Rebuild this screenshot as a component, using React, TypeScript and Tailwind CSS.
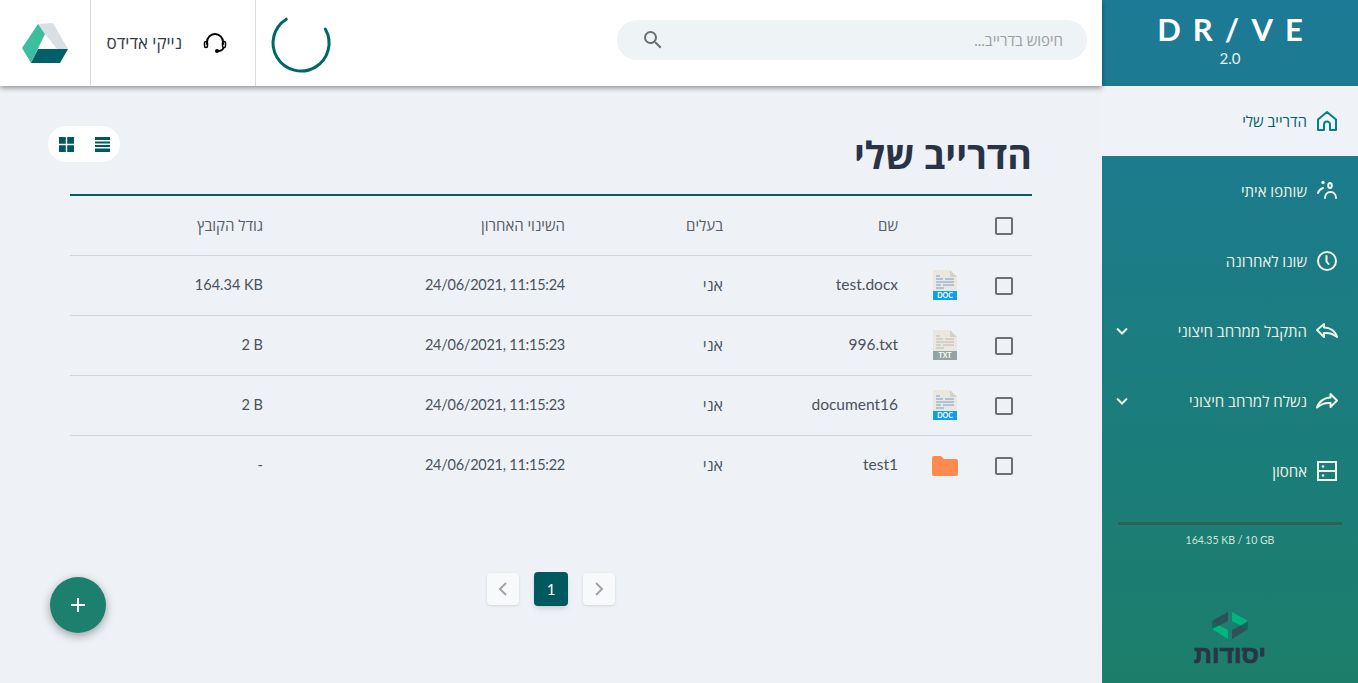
const files = [
  { name: "test.docx", type: "doc", modified: "24/06/2021, 11:15:24", size: "164.34 KB" },
  { name: "996.txt", type: "txt", modified: "24/06/2021, 11:15:23", size: "2 B" },
  { name: "document16", type: "doc", modified: "24/06/2021, 11:15:23", size: "2 B" },
  { name: "test1", type: "folder", modified: "24/06/2021, 11:15:22", size: "-" },
];

const gridCols = "grid grid-cols-[56px_62px_175px_158px_302px_1fr] items-center";

function HomeIcon() {
  return (
    <svg width="22" height="22" viewBox="0 0 22 22" fill="none" stroke="currentColor" strokeWidth="2">
      <path d="M2 9.500 11 2l9 7.500V20H14v-5.500a3 3 0 0 0-6 0V20H2z" strokeLinejoin="round" />
    </svg>
  );
}

function PeopleIcon() {
  return (
    <svg width="22" height="22" viewBox="0 0 22 22" fill="none" stroke="currentColor" strokeWidth="2" strokeLinecap="round">
      <ellipse cx="14" cy="5.500" rx="1.800" ry="2.500" />
      <circle cx="7" cy="2.500" r="1.700" fill="currentColor" stroke="none" />
      <path d="M2 13c.6-2 2.400-4 5-5M9 18c0-3 2-6 5.500-6s5.500 3 5.500 6" />
    </svg>
  );
}

function ClockIcon() {
  return (
    <svg width="22" height="22" viewBox="0 0 22 22" fill="none" stroke="currentColor" strokeWidth="2" strokeLinecap="round">
      <circle cx="11" cy="11" r="9" />
      <path d="M10.500 6v5.500l2 2.500" />
    </svg>
  );
}

function ReplyIcon() {
  return (
    <svg width="22" height="16" viewBox="0 0 22 16" fill="none" stroke="currentColor" strokeWidth="2" strokeLinejoin="round">
      <path d="M8 1 1 7l7 7v-4c5-.500 9 .500 13 4C19.500 8 14 4.500 8 4.500z" />
    </svg>
  );
}

function ForwardIcon() {
  return (
    <svg width="22" height="16" viewBox="0 0 22 16" fill="none" stroke="currentColor" strokeWidth="2" strokeLinejoin="round">
      <path d="M14.500 1 21 7.500 14.500 14v-4C10 9.500 5 11 1 14.500 3 8 9 4.500 14.500 4.500z" />
    </svg>
  );
}

function StorageIcon() {
  return (
    <svg width="20" height="20" viewBox="0 0 20 20" fill="none" stroke="currentColor" strokeWidth="2">
      <rect x="1" y="1" width="18" height="18" />
      <path d="M1 10h18" />
      <circle cx="6" cy="5.500" r="1.300" fill="currentColor" stroke="none" />
      <circle cx="6" cy="14.500" r="1.300" fill="currentColor" stroke="none" />
    </svg>
  );
}

function Chevron() {
  return (
    <svg width="14" height="10" viewBox="0 0 14 10" fill="none" stroke="currentColor" strokeWidth="2">
      <path d="M2 2.500l5 5 5-5" />
    </svg>
  );
}

function FileIcon({ type }: { type: string }) {
  if (type === "folder") {
    return (
      <svg width="26" height="20" viewBox="0 0 26 20">
        <path d="M2 0h7l3 3h12a2 2 0 0 1 2 2v13a2 2 0 0 1-2 2H2a2 2 0 0 1-2-2V2a2 2 0 0 1 2-2z" fill="#ff8a50" />
      </svg>
    );
  }
  const doc = type === "doc";
  const line = doc ? "#7d9bc9" : "#bdbab0";
  return (
    <div className="relative w-[24px] h-[30px] mb-[2px]">
      <svg width="24" height="30" viewBox="0 0 24 30">
        <path d="M0 0h17l7 7v23H0z" fill="#e9e7e0" />
        <path d="M17 0l7 7h-7z" fill="#d3d1c8" />
        <path d="M3 6h4M3 9h7M12 9h9M3 12h18M3 15h5M10 15h11M3 18h8" stroke={line} strokeWidth="1" />
        <rect y="21" width="24" height="9" fill={doc ? "#0f9fe6" : "#93a4a2"} />
      </svg>
      <span className="absolute bottom-0 left-0 w-full h-[9px] text-center text-[7px] leading-[9px] font-bold text-white">
        {doc ? "DOC" : "TXT"}
      </span>
    </div>
  );
}

function Checkbox() {
  return <div className="w-[18px] h-[18px] mx-auto border-2 border-[#6e6e6e] rounded-[2px]" />;
}

function NavItem({ icon, label, active, arrow }: { icon: React.ReactNode; label: string; active?: boolean; arrow?: boolean }) {
  return (
    <div className={`h-[70px] flex items-center gap-[9px] pr-[20px] pl-[13px] text-[15px] ${active ? "bg-[#eff3f8] text-[#006068]" : "text-[#f0f3e6]"}`}>
      <span className={`w-[22px] flex justify-center ${active ? "text-[#00808f]" : ""}`}>{icon}</span>
      <span>{label}</span>
      {arrow && (
        <span className="ms-auto">
          <Chevron />
        </span>
      )}
    </div>
  );
}

export default function App() {
  return (
    <div dir="rtl" className="h-[683px] w-[1358px] flex overflow-hidden bg-[#eef1f6] text-[#333c4a] font-['Lato','Open_Sans','Noto_Sans',sans-serif]">
      <aside className="w-[256px] shrink-0 flex flex-col bg-gradient-to-b from-[#1d7a97] to-[#1c7e6a]">
        <div className="h-[86px] flex flex-col items-center text-white" dir="ltr">
          <div className="mt-[10px] h-[38px] text-[31px] leading-[38px] font-bold font-['Lato',sans-serif] tracking-[12px] pl-[12px]">DR/VE</div>
          <div className="text-[15px] leading-[20px] text-[#e6f0ee]">2.0</div>
        </div>
        <NavItem active icon={<HomeIcon />} label="הדרייב שלי" />
        <NavItem icon={<PeopleIcon />} label="שותפו איתי" />
        <NavItem icon={<ClockIcon />} label="שונו לאחרונה" />
        <NavItem arrow icon={<ReplyIcon />} label="התקבל ממרחב חיצוני" />
        <NavItem arrow icon={<ForwardIcon />} label="נשלח למרחב חיצוני" />
        <NavItem icon={<StorageIcon />} label="אחסון" />
        <div className="mx-[16px] mt-[16px] h-[3px] bg-[#2a6159]" />
        <div className="mt-[7px] text-center text-[10.500px] leading-[16px] text-[#cfe3dc]" dir="ltr">164.35 KB / 10 GB</div>
        <div className="mt-[64px] flex flex-col items-center">
          <svg width="36" height="27" viewBox="0 0 36 27">
            <path d="M0 9 7.300 13.500 0 17z" fill="#0b6a5c" />
            <path d="M36 9 28.700 13.500 36 17z" fill="#0b6a5c" />
            <path d="M0 9 16 0v9L7.300 13.500z" fill="#2f5058" />
            <path d="M20 0l16 9-7.300 4.500L20 9z" fill="#00b67e" />
            <path d="M0 17l7.300-3.500L16 18v9z" fill="#00b67e" />
            <path d="M36 17l-7.300-3.500L20 18v9z" fill="#2f5058" />
          </svg>
          <div className="text-[25px] leading-[30px] font-bold text-[#2a3444] [-webkit-text-stroke:0.7px_#2a3444] font-['Liberation_Sans',sans-serif]">יסודות</div>
        </div>
      </aside>

      <div className="flex-1 flex flex-col min-w-0">
        <header className="h-[86px] shrink-0 bg-white flex items-center shadow-[0_2px_5px_rgba(0,0,0,0.4)] relative">
          <div className="mr-[15px] mb-[6px] w-[470px] h-[40px] rounded-full bg-[#eef3f6] flex items-center pr-[24px] pl-[24px] text-[15px] text-[#9a9fa3]">
            <span>חיפוש בדרייב...</span>
            <svg className="ms-auto" width="24" height="24" viewBox="0 0 24 24" fill="#6e6e6e">
              <path d="M15.500 14h-.79l-.28-.27A6.470 6.470 0 0 0 16 9.500 6.500 6.500 0 1 0 9.500 16c1.610 0 3.090-.59 4.230-1.570l.27.28v.79l5 4.990L20.490 19l-4.990-5zm-6 0C7.010 14 5 11.990 5 9.500S7.010 5 9.500 5 14 7.010 14 9.500 11.990 14 9.500 14z" />
            </svg>
          </div>
          <div className="ms-auto flex h-full items-stretch">
            <div className="w-[90px] flex items-center justify-center">
              <svg width="64" height="64" viewBox="0 0 64 64" fill="none" stroke="#00666a" strokeWidth="3" strokeLinecap="round">
                <path d="M17.300 8.200A28 28 0 1 0 56.300 18" />
              </svg>
            </div>
            <div className="w-[166px] border-x border-[#dcdcdc] flex items-center gap-[21px] pr-[28px] text-[17px]">
              <svg className="shrink-0 mt-[2px]" width="24" height="24" viewBox="0 0 24 24" fill="none" stroke="#000" strokeWidth="2" strokeLinecap="round">
                <path d="M4 12V10a8 8 0 0 1 16 0v2" />
                <rect x="1.500" y="9.500" width="3" height="6" rx="1.500" strokeWidth="1.500" />
                <rect x="19.500" y="9.500" width="3" height="6" rx="1.500" strokeWidth="1.500" />
                <path d="M20.500 16c-.8 2-2.500 3-5.500 3" />
                <circle cx="14" cy="19" r="2" fill="#000" stroke="none" />
              </svg>
              <span className="whitespace-nowrap">נייקי אדידס</span>
            </div>
            <div className="w-[90px] flex items-center justify-center">
              <svg width="46" height="40" viewBox="0 0 46 40">
                <path d="M16 1 31 0l15 26H35L23 11z" fill="#dcdfe2" />
                <path d="M16 1l7 10L9 40 0 25z" fill="#3dbf9f" />
                <path d="M16 26h30l-8 14H9z" fill="#00606a" />
              </svg>
            </div>
          </div>
        </header>

        <main className="flex-1 relative pr-[70px] pl-[70px]">
          <div className="flex items-end h-[110px] pb-[14px] border-b-2 border-[#00605f]">
            <h1 className="text-[37.500px] leading-[50px] font-bold text-[#283347]">הדרייב שלי</h1>
          </div>
          <div className="absolute left-[48px] top-[40px] w-[72px] h-[36px] rounded-full bg-white flex items-center justify-center gap-[21px] text-[#00595f]">
            <svg width="15" height="15" viewBox="0 0 15 15" fill="currentColor">
              <path d="M0 0h15v3H0zM0 4.500h15v2H0zM0 8h15v2H0zM0 11.500h15V15H0z" />
            </svg>
            <svg width="15" height="15" viewBox="0 0 15 15" fill="currentColor">
              <path d="M0 0h6.800v6.800H0zM8.200 0H15v6.800H8.200zM0 8.200h6.800V15H0zM8.200 8.200H15V15H8.200z" />
            </svg>
          </div>

          <div className={`${gridCols} h-[60px] border-b border-[#d2d5da] text-[15px] text-[#555c66]`}>
            <Checkbox />
            <span />
            <span className="pr-[16px]">שם</span>
            <span className="pr-[16px]">בעלים</span>
            <span className="pr-[16px]">השינוי האחרון</span>
            <span className="pr-[16px]">גודל הקובץ</span>
          </div>
          {files.map((file, i) => (
            <div key={file.name} className={`${gridCols} h-[60px] text-[#4a515c] ${i < files.length - 1 ? "border-b border-[#d2d5da]" : ""}`}>
              <Checkbox />
              <div className="flex justify-center">
                <FileIcon type={file.type} />
              </div>
              <span className="pr-[16px] pb-[2px] text-right text-[15.500px]" dir="ltr">{file.name}</span>
              <span className="pr-[16px] pb-[2px] text-[16px]">אני</span>
              <span className="pr-[16px] pb-[2px] text-right text-[14.500px] tracking-[-0.25px]" dir="ltr">{file.modified}</span>
              <span className="pr-[16px] pb-[2px] text-right text-[14.500px]" dir="ltr">{file.size}</span>
            </div>
          ))}

          <div className="mt-[76px] flex justify-center items-center gap-[15px]">
            <button className="w-[32px] h-[32px] rounded bg-[#f8f9fb] shadow-sm flex items-center justify-center text-[#a0a4a8]">
              <svg width="10" height="14" viewBox="0 0 10 14" fill="none" stroke="currentColor" strokeWidth="2"><path d="M2 1l6 6-6 6" /></svg>
            </button>
            <button className="w-[34px] h-[34px] rounded bg-[#00595f] shadow-md text-white text-[15px]">1</button>
            <button className="w-[32px] h-[32px] rounded bg-[#f8f9fb] shadow-sm flex items-center justify-center text-[#a0a4a8]">
              <svg width="10" height="14" viewBox="0 0 10 14" fill="none" stroke="currentColor" strokeWidth="2"><path d="M8 1L2 7l6 6" /></svg>
            </button>
          </div>

          <button className="absolute left-[50px] top-[491px] w-[56px] h-[56px] rounded-full bg-[#1d7f6e] shadow-[0_3px_10px_rgba(0,0,0,0.35)] flex items-center justify-center">
            <svg width="14" height="14" viewBox="0 0 14 14" stroke="#fff" strokeWidth="2"><path d="M7 0v14M0 7h14" /></svg>
          </button>
        </main>
      </div>
    </div>
  );
}
